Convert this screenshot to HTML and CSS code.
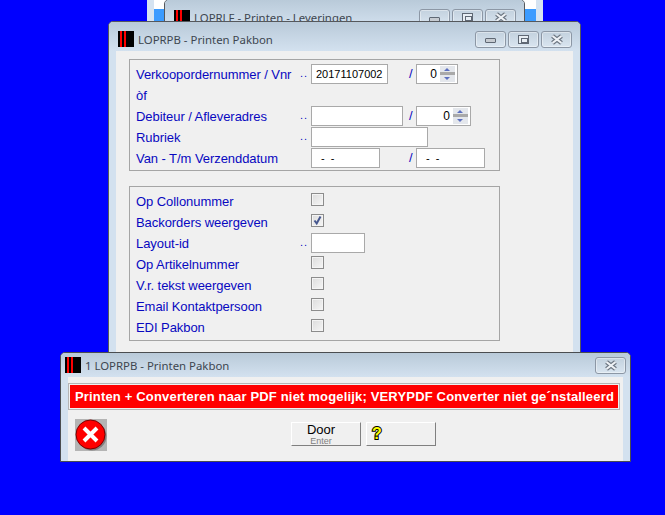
FILE: index.html
```html
<!DOCTYPE html>
<html>
<head>
<meta charset="utf-8">
<title>LOPRPB - Printen Pakbon</title>
<link rel="stylesheet" href="styles.css">
</head>
<body>
<div class="rear-window"></div>

<section class="win back-win">
  <header class="titlebar">
    <svg class="app-icon" viewBox="0 0 16 16"><rect width="16" height="16" fill="#000"/><rect x="2" width="2" height="16" fill="#f00"/><rect x="6" width="2" height="16" fill="#f00"/></svg>
    <span class="title">LOPRLF - Printen - Leveringen</span>
    <div class="caption">
      <button class="cap"><i class="g-min"></i></button>
      <button class="cap"><i class="g-max"></i></button>
      <button class="cap"><svg class="g-x" viewBox="0 0 14 11"><path d="M2.5 2 L11.5 9 M11.5 2 L2.5 9" stroke="#6d7682" stroke-width="4.4"/><path d="M2.5 2 L11.5 9 M11.5 2 L2.5 9" stroke="#eef2f6" stroke-width="2.2"/></svg></button>
    </div>
  </header>
</section>

<section class="win main-win">
  <header class="titlebar">
    <svg class="app-icon" viewBox="0 0 16 16"><rect width="16" height="16" fill="#000"/><rect x="2" width="2" height="16" fill="#f00"/><rect x="6" width="2" height="16" fill="#f00"/></svg>
    <span class="title">LOPRPB - Printen Pakbon</span>
    <div class="caption">
      <button class="cap"><i class="g-min"></i></button>
      <button class="cap"><i class="g-max"></i></button>
      <button class="cap"><svg class="g-x" viewBox="0 0 14 11"><path d="M2.5 2 L11.5 9 M11.5 2 L2.5 9" stroke="#6d7682" stroke-width="4.4"/><path d="M2.5 2 L11.5 9 M11.5 2 L2.5 9" stroke="#eef2f6" stroke-width="2.2"/></svg></button>
    </div>
  </header>
  <div class="client">
    <div class="panel panel-top">
      <div class="row">
        <span class="label">Verkoopordernummer / Vnr</span><span class="dots">..</span>
        <div class="col"><span class="field w77">20171107002</span></div>
        <span class="slash">/</span>
        <div class="spin w42"><span class="num">0</span><span class="arrows"><i class="up"></i><i class="down"></i></span></div>
      </div>
      <div class="row"><span class="label">òf</span></div>
      <div class="row">
        <span class="label">Debiteur / Afleveradres</span><span class="dots">..</span>
        <div class="col"><span class="field w92"></span></div>
        <span class="slash">/</span>
        <div class="spin w55"><span class="num">0</span><span class="arrows"><i class="up"></i><i class="down"></i></span></div>
      </div>
      <div class="row">
        <span class="label">Rubriek</span><span class="dots">..</span>
        <span class="field w117"></span>
      </div>
      <div class="row">
        <span class="label">Van - T/m Verzenddatum</span><span class="dots"></span>
        <div class="col"><span class="field w69 date">- -</span></div>
        <span class="slash">/</span>
        <span class="field w69 date">- -</span>
      </div>
    </div>

    <div class="panel panel-bottom">
      <div class="row"><span class="label">Op Collonummer</span><span class="dots"></span><span class="check"></span></div>
      <div class="row"><span class="label">Backorders weergeven</span><span class="dots"></span><span class="check"><svg viewBox="0 0 11 11"><path d="M2.5 5.5 L4.7 8.5 L8.5 1.5" fill="none" stroke="#46578f" stroke-width="2"/></svg></span></div>
      <div class="row"><span class="label">Layout-id</span><span class="dots">..</span><span class="field w54"></span></div>
      <div class="row"><span class="label">Op Artikelnummer</span><span class="dots"></span><span class="check"></span></div>
      <div class="row"><span class="label">V.r. tekst weergeven</span><span class="dots"></span><span class="check"></span></div>
      <div class="row"><span class="label">Email Kontaktpersoon</span><span class="dots"></span><span class="check"></span></div>
      <div class="row"><span class="label">EDI Pakbon</span><span class="dots"></span><span class="check"></span></div>
    </div>
  </div>
</section>

<section class="win dialog">
  <header class="titlebar">
    <svg class="app-icon" viewBox="0 0 16 16"><rect width="16" height="16" fill="#000"/><rect x="2" width="2" height="16" fill="#f00"/><rect x="6" width="2" height="16" fill="#f00"/></svg>
    <span class="title">1 LOPRPB - Printen Pakbon</span>
    <div class="caption">
      <button class="cap"><svg class="g-x" viewBox="0 0 14 11"><path d="M2.5 2 L11.5 9 M11.5 2 L2.5 9" stroke="#6d7682" stroke-width="4.4"/><path d="M2.5 2 L11.5 9 M11.5 2 L2.5 9" stroke="#eef2f6" stroke-width="2.2"/></svg></button>
    </div>
  </header>
  <div class="dialog-client">
    <div class="alert">Printen + Converteren naar PDF niet mogelijk; VERYPDF Converter niet ge´nstalleerd</div>
    <div class="dialog-foot">
      <svg class="err" viewBox="0 0 32 32">
        <rect width="32" height="32" fill="#b4b4b4"/>
        <circle cx="17" cy="17" r="14.5" fill="#808080"/>
        <circle cx="15.5" cy="15.5" r="14.5" fill="#f00" stroke="#7a0000" stroke-width="1"/>
        <path d="M9 9 L22 22 M22 9 L9 22" stroke="#fff" stroke-width="4"/>
      </svg>
      <div class="btns">
        <button class="btn"><span class="btn-main">Door</span><span class="btn-sub">Enter</span></button>
        <button class="btn btn-help"><span class="help">?</span></button>
      </div>
    </div>
  </div>
</section>
</body>
</html>
```
FILE: styles.css
```css
* { box-sizing: border-box; }
html, body { margin: 0; height: 100%; }
body {
  background: #0000ff;
  font-family: "Liberation Sans", Arial, sans-serif;
  font-size: 13px;
  overflow: hidden;
  position: relative;
}

/* desktop windows */
.rear-window {
  position: absolute;
  left: 147px;
  top: -10px;
  width: 396px;
  height: 80px;
  background: #ffffff;
  border: solid #d5e3f1;
  border-width: 0 7px;
}
.rear-window::before {
  content: "";
  position: absolute;
  left: 0;
  right: 0;
  top: 19px;
  height: 50px;
  background: #3b9bff;
}
.win {
  position: absolute;
  background: #d3e1ef;
  border: 1px solid #55585c;
  border-radius: 5px 5px 0 0;
}
.back-win { left: 164px; top: -1px; width: 361px; height: 60px; }
.main-win { left: 108px; top: 21px; width: 473px; height: 340px; }
.dialog {
  left: 60px;
  top: 352px;
  width: 571px;
  height: 110px;
  border-color: #4a4d50;
}

.titlebar {
  display: flex;
  align-items: center;
  height: 29px;
  padding: 5px 8px 0 9px;
  background: linear-gradient(#b9cad9, #d3e1ef);
  border-radius: 4px 4px 0 0;
}
.back-win .titlebar { height: 27px; padding-top: 8px; }
.dialog .titlebar { height: 24px; padding: 0 4px; }
.app-icon { width: 16px; height: 16px; flex: none; }
.title {
  margin-left: 4px;
  font-family: "Noto Sans", sans-serif;
  font-size: 11.4px;
  color: #3d4650;
  white-space: nowrap;
}
.caption { margin-left: auto; display: flex; gap: 2px; }
.cap {
  width: 31px;
  height: 17px;
  padding: 0;
  display: flex;
  align-items: center;
  justify-content: center;
  background: linear-gradient(#c3d1de, #d9e5f0);
  border: 1px solid #8c97a5;
  border-radius: 3px;
  box-shadow: inset 0 0 0 1px rgba(255,255,255,.4);
}
.g-min {
  display: block;
  width: 11px;
  height: 5px;
  margin-top: 3px;
  background: #c6cbd1;
  border: 1px solid #5f6874;
  border-radius: 1px;
}
.g-max {
  display: block;
  width: 11px;
  height: 9px;
  background: #e8eef4;
  border: 1px solid #5f6874;
  position: relative;
}
.g-max::after {
  content: "";
  position: absolute;
  left: 2px;
  top: 2px;
  width: 5px;
  height: 3px;
  border: 1px solid #5f6874;
}
.g-x { width: 14px; height: 11px; }

/* main client */
.client {
  margin: 0 7px;
  height: 100%;
  padding: 8px 12px 0 13px;
  background: #f0f0f0;
}
.panel {
  width: 371px;
  padding: 3px 0 2px 6px;
  border: 1px solid #a5a5a5;
}
.panel-top { height: 112px; margin-bottom: 15px; }
.panel-bottom { height: 155px; }
.row { display: flex; align-items: center; height: 21px; }
.label {
  flex: none;
  width: 164px;
  padding-top: 2px;
  color: #0808c0;
  font-size: 13px;
  letter-spacing: -.06px;
  line-height: 15px;
  white-space: nowrap;
}
.dots {
  flex: none;
  width: 11px;
  color: #0808c0;
  font-size: 11px;
  line-height: 1;
  letter-spacing: 1px;
}
.col { flex: none; width: 98px; }
.slash {
  flex: none;
  width: 7px;
  color: #0808c0;
  font-size: 13px;
}
.field {
  display: block;
  height: 20px;
  padding: 0 4px;
  background: #fff;
  border: 1px solid #a9a9a9;
  color: #000;
  font-size: 11px;
  line-height: 18px;
  white-space: nowrap;
  overflow: hidden;
}
.date { padding-left: 9px; word-spacing: 3px; }
.w54 { width: 54px; }
.w69 { width: 69px; }
.w77 { width: 77px; }
.w92 { width: 92px; }
.w117 { width: 117px; }
.spin {
  display: flex;
  align-items: center;
  justify-content: flex-end;
  height: 20px;
  background: #fff;
  border: 1px solid #a9a9a9;
  padding-right: 2px;
}
.w42 { width: 42px; }
.w55 { width: 55px; }
.num { font-size: 12px; margin-right: 3px; }
.arrows {
  width: 15px;
  height: 16px;
  background: linear-gradient(#e4e7ec 0 6px, #a9a9a9 6px 9px, #e4e7ec 9px);
  position: relative;
  display: block;
}
.arrows i {
  position: absolute;
  left: 4px;
  width: 0;
  height: 0;
  border-left: 3.5px solid transparent;
  border-right: 3.5px solid transparent;
}
.up { top: 2px; border-bottom: 3px solid #5c70c0; }
.down { bottom: 2px; border-top: 3px solid #5c70c0; }
.check {
  display: block;
  width: 13px;
  height: 13px;
  margin-bottom: 2px;
  background: linear-gradient(135deg, #dcdcdc, #f6f6f6);
  border: 1px solid #8c8c8c;
  box-shadow: inset 0 0 0 1px #f4f4f4;
}
.check svg { display: block; width: 11px; height: 11px; }

/* dialog */
.dialog-client {
  margin: 0 7px;
  height: 84px;
  padding-top: 6px;
  background: #f0f0f0;
}
.alert {
  width: 552px;
  height: 27px;
  padding-left: 5px;
  border: 2px solid #f0f0f0;
  outline: 1px solid #b5b5b5;
  outline-offset: -1px;
  background: #f00;
  color: #fff;
  font-size: 13px;
  font-weight: 700;
  letter-spacing: .17px;
  line-height: 23px;
  white-space: nowrap;
}
.dialog-foot { display: flex; align-items: flex-start; padding: 9px 0 0 7px; }
.err { display: block; width: 32px; height: 32px; flex: none; }
.btns { display: flex; gap: 5px; margin: 3px 0 0 184px; }
.btn {
  width: 70px;
  height: 24px;
  padding: 1px 10px 0 0;
  display: flex;
  flex-direction: column;
  align-items: center;
  justify-content: center;
  background: #f0f0f0;
  border: 1px solid;
  border-color: #fff #808080 #808080 #fff;
  font-family: "Liberation Sans", Arial, sans-serif;
}
.btn-main { display: block; font-size: 13px; line-height: 12px; color: #000; }
.btn-sub { display: block; font-size: 9px; line-height: 10px; color: #808080; }
.btn-help { align-items: flex-start; padding: 0 0 0 5px; }
.help {
  font-size: 16px;
  font-weight: 700;
  line-height: 16px;
  color: #ffff00;
  -webkit-text-stroke: 2px #000;
  paint-order: stroke fill;
}
```
